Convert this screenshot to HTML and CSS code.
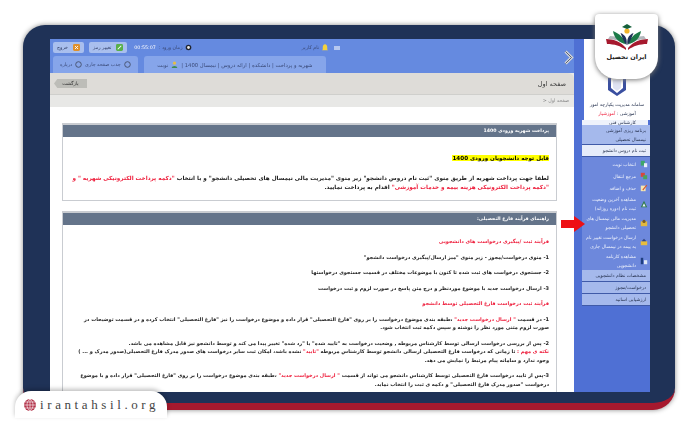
FILE: index.html
```html
<!DOCTYPE html>
<html lang="fa" dir="rtl">
<head>
  <meta charset="UTF-8">
  <title>راهنمای فرآیند فارغ التحصیلی</title>
  <link rel="stylesheet" href="styles.css">
</head>
<body>
  <div class="frame">
    <div class="side">
      <div class="brand">
        <svg class="emblem" viewBox="0 0 20 18"><path d="M1 0h3v10l6 5 6-5V0h3v12l-9 6-9-6z" fill="#3a4fa0"/><path d="M6 2h8v8l-4 3-4-3z" fill="#dfe3f3"/></svg>
        <p>سامانه مدیریت یکپارچه امور آموزشی : <span class="red">آموزشیار</span></p>
      </div>
      <div class="user">کارشناس فنی</div>
      <div class="menu-head two">برنامه ریزی آموزشی<br>نیمسال تحصیلی</div>
      <div class="menu-head open">ثبت نام دروس دانشجو</div>
      <ul class="submenu">
        <li><svg viewBox="0 0 10 10"><rect x="1" y="1" width="5" height="6" fill="#3fa66a"/><rect x="5" y="4" width="4" height="5" fill="#e9eef8"/></svg><span>انتخاب نوبت</span></li>
        <li><svg viewBox="0 0 10 10"><rect x="1" y="1" width="5" height="5" fill="#d8473c"/><rect x="4" y="4" width="5" height="5" fill="#4aa35e"/></svg><span>مرجع انتقال</span></li>
        <li><svg viewBox="0 0 10 10"><rect x="1" y="2" width="6" height="7" fill="#f3e6b4"/><path d="M3 7l5-6 1 1-5 6z" fill="#d8562c"/></svg><span>حذف و اضافه</span></li>
        <li class="tall"><svg viewBox="0 0 10 10"><path d="M5 1l4 8H1z" fill="#2f7a4d"/><path d="M5 4l2 4H3z" fill="#e6edf7"/></svg><span>مشاهده آخرین وضعیت<br>ثبت نام (دوره روزانه)</span></li>
        <li class="tall"><svg viewBox="0 0 10 10"><rect x="1" y="3" width="8" height="6" fill="#e2b93f"/><circle cx="5" cy="3" r="2" fill="#7a5b23"/></svg><span>مدیریت مالی نیمسال های<br>تحصیلی دانشجو</span></li>
        <li class="tall"><svg viewBox="0 0 10 10"><rect x="1" y="4" width="8" height="5" fill="#e8bd3c"/><path d="M2 4l3-3 3 3z" fill="#33467f"/></svg><span>ارسال درخواست تغییر نام<br>به بیمه در نیمسال جاری</span></li>
        <li class="tall"><svg viewBox="0 0 10 10"><rect x="1" y="1" width="3" height="8" fill="#1f3f7f"/><rect x="5" y="4" width="4" height="5" fill="#dfe8f6"/></svg><span>مشاهده کارنامه<br>دانشجویی</span></li>
      </ul>
      <div class="menu-head">مشخصات نظام دانشجویی</div>
      <div class="menu-head">درخواست/مجوز</div>
      <div class="menu-head">ارزشیابی اساتید</div>
    </div>

    <div class="main">
      <div class="top">
        <div class="topbar">
          <div class="user-name">
            <i class="mini"></i>
            <svg viewBox="0 0 8 10"><path d="M4 0c2 0 3 2 3 4v3l1 1H0l1-1V4c0-2 1-4 3-4z" fill="#f4d23c"/></svg>
            <span>نام کاربر</span>
          </div>
          <div class="top-left">
            <span class="clock">
              <svg viewBox="0 0 10 10"><circle cx="5" cy="5" r="4" fill="#20242e"/><circle cx="5" cy="5" r="2" fill="#e6e6e6"/></svg>
              زمان ورود : <b>00:55:07</b>
            </span>
            <button class="btn"><svg viewBox="0 0 10 10"><rect width="10" height="10" rx="2" fill="#58b04a"/><path d="M2 7l5-5 1 1-5 5z" fill="#fff"/></svg>تغییر رمز</button>
            <button class="btn"><svg viewBox="0 0 10 10"><rect width="10" height="10" rx="2" fill="#e0912c"/><path d="M3 3l4 4M7 3l-4 4" stroke="#fff" stroke-width="1.4"/></svg>خروج</button>
          </div>
        </div>
        <div class="tabs">
          <div class="tab wide">شهریه و پرداخت | دانشکده | ارائه دروس | نیمسال 1400 | <svg viewBox="0 0 10 10"><circle cx="5" cy="3" r="2.4" fill="#e3bd49"/><path d="M1 10c0-4 8-4 8 0z" fill="#3f8c52"/></svg> نوبت</div>
          <div class="tab"><svg viewBox="0 0 10 10"><circle cx="5" cy="5" r="4" fill="none" stroke="#4a5674" stroke-width="1.4"/></svg> جذب صفحه جاری <svg viewBox="0 0 10 10"><circle cx="5" cy="5" r="4" fill="none" stroke="#4a5674" stroke-width="1.4"/></svg> درباره</div>
        </div>
        <svg class="chevron" viewBox="0 0 10 15"><path d="M1.5 1.5l6 6-6 6" fill="none" stroke="#d5d5d5" stroke-width="3"/><path d="M1.5 1.5l6 6-6 6" fill="none" stroke="#55627c" stroke-width="1"/></svg>
      </div>

      <div class="page-head">
        <div class="title-row">
          <h1>صفحه اول</h1>
          <span class="back">بازگشت</span>
        </div>
        <div class="crumb">صفحه اول &lt;</div>
      </div>

      <div class="content">
        <section class="panel first">
          <h2>پرداخت شهریه ورودی 1400</h2>
          <div class="panel-body">
            <p class="notice"><mark>قابل توجه دانشجویان ورودی 1400</mark></p>
            <p class="lead">لطفا جهت پرداخت شهریه از طریق منوی "ثبت نام دروس دانشجو" زیر منوی "مدیریت مالی نیمسال های تحصیلی دانشجو" و با انتخاب <span class="red">"دکمه پرداخت الکترونیکی شهریه " و "دکمه پرداخت الکترونیکی هزینه بیمه و خدمات آموزشی"</span> اقدام به پرداخت نمایید.</p>
          </div>
        </section>

        <section class="panel">
          <h2>راهنمای فرآیند فارغ التحصیلی:</h2>
          <div class="panel-body steps">
            <p class="red">فرآیند ثبت /پیگیری درخواست های دانشجویی</p>
            <p>1- منوی درخواست/مجوز - زیر منوی "میز ارسال/پیگیری درخواست دانشجو"</p>
            <p>2- جستجوی درخواست های ثبت شده تا کنون با موضوعات مختلف در قسمت جستجوی درخواستها</p>
            <p>3- ارسال درخواست جدید با موضوع موردنظر و درج متن پاسخ در صورت لزوم و ثبت درخواست</p>
            <p class="red">فرآیند ثبت درخواست فارغ التحصیلی توسط دانشجو</p>
            <p>1- در قسمت <span class="red">" ارسال درخواست جدید"</span> ،طبقه بندی موضوع درخواست را بر روی "فارغ التحصیلی" قرار داده و موضوع درخواست را نیز "فارغ التحصیلی" انتخاب کرده و در قسمت توضیحات در صورت لزوم متنی مورد نظر را نوشته و سپس دکمه ثبت انتخاب شود.</p>
            <p>2- پس از بررسی درخواست ارسالی توسط کارشناس مربوطه , وضعیت درخواست به "تایید شده" یا "رد شده" تغییر پیدا می کند و توسط دانشجو نیز قابل مشاهده می باشد.<br><span class="red">نکته ی مهم :</span> تا زمانی که درخواست فارغ التحصیلی ارسالی دانشجو توسط کارشناس مربوطه <span class="red">"تایید"</span> نشده باشد، امکان ثبت سایر درخواست های صدور مدرک فارغ التحصیلی(صدور مدرک و ... ) وجود ندارد و سامانه پیام مرتبط را نمایش می دهد.</p>
            <p>3-پس از تایید درخواست فارغ التحصیلی توسط کارشناس دانشجو می تواند از قسمت <span class="red">" ارسال درخواست جدید"</span> ،طبقه بندی موضوع درخواست را بر روی "فارغ التحصیلی" قرار داده و با موضوع درخواست "صدور مدرک فارغ التحصیلی" و دکمه ی ثبت را انتخاب نماید.</p>
          </div>
        </section>
      </div>
    </div>
  </div>

  <svg class="arrow" viewBox="0 0 24 16"><path d="M0 4h13V0l11 8-11 8v-4H0z" fill="#ee0f14"/></svg>

  <div class="logo-card">
    <svg viewBox="0 0 42 26">
      <path d="M0 15c8 0 15 3 20 9v2C15 22 8 20 1 20z" fill="#a6192e"/>
      <path d="M42 15c-8 0-15 3-20 9v2c5-4 12-6 19-6z" fill="#a6192e"/>
      <path d="M4 12c7 0 13 3 16 9C15 17 9 15 2 15z" fill="#b4b8bd"/>
      <path d="M38 12c-7 0-13 3-16 9 5-4 11-6 18-6z" fill="#b4b8bd"/>
      <path d="M20 20C18 14 14 10 7 7c1 7 6 12 13 13z" fill="#1c7a48"/>
      <path d="M22 20c2-6 6-10 13-13-1 7-6 12-13 13z" fill="#1c7a48"/>
      <path d="M20.500 21c-3-3-4-8-6-12 5 2 7 6 6 12zM21.500 21c3-3 4-8 6-12-5 2-7 6-6 12z" fill="#1f3257"/>
      <circle cx="21" cy="7" r="2.600" fill="#f0b429"/>
      <path d="M16 3l5-3 5 3-5 2z" fill="#14603a"/>
    </svg>
    <span>ایران تحصیل</span>
  </div>

  <div class="site-badge">
    <svg viewBox="0 0 14 14"><circle cx="7" cy="7" r="6" fill="#b3334a"/><path d="M1 7h12M7 1v12M2 4h10M2 10h10M7 1c-4 3-4 9 0 12M7 1c4 3 4 9 0 12" fill="none" stroke="#fff" stroke-width=".6"/></svg>
    <span>irantahsil.org</span>
  </div>
</body>
</html>
```

FILE: styles.css
```css
html, body {
  margin: 0;
  height: 430px;
  overflow: hidden;
  background: white;
}
body {
  font-family: "DejaVu Sans", "Noto Sans", sans-serif;
  position: relative;
}
p, h1, h2, ul {
  margin: 0;
  padding: 0;
}
.red {
  color: #ee1c3a;
}

/* outer window */
.frame {
  display: flex;
  height: 364px;
  margin: 25px 25px 0 23px;
  padding: 14px 25px 0 27px;
  background: #1f3257;
  border-bottom: 7px solid #a6192e;
  border-radius: 22px;
  box-shadow: 0 0 5px #8a8a8a;
  filter: blur(.35px);
}
.frame > * {
  height: 353px;
}

/* right column */
.side {
  flex: 0 0 68px;
  padding-left: 8px;
  background: #4f70d4;
  color: #26324f;
  font-size: 4.6px;
}
.brand {
  height: 81px;
  box-sizing: border-box;
  margin-left: 2px;
  padding-top: 39px;
  background: white;
  text-align: center;
}
.emblem {
  display: block;
  width: 20px;
  height: 18px;
  margin: 0 auto 4px;
}
.brand p {
  line-height: 9px;
  padding: 0 2px;
}
.user {
  height: 5px;
  margin-right: 2px;
  padding-right: 12px;
  background: #eef2fb;
  line-height: 5px;
}
.menu-head {
  height: 11px;
  padding: 0 4px 0 1px;
  line-height: 11px;
  background: #a5b9ec;
  border-bottom: 1px solid #3f5aa8;
}
.menu-head.two {
  height: 20px;
  line-height: 9px;
  padding-top: 1px;
  box-sizing: border-box;
}
.menu-head.open {
  background: #e6ecfa;
}
.submenu {
  list-style: none;
  box-sizing: border-box;
  height: 113px;
  padding-top: 1px;
  background: #6d88dc;
  color: #eef2fc;
}
.submenu li {
  display: flex;
  align-items: center;
  gap: 4px;
  height: 12px;
  padding: 0 2px 0 1px;
  line-height: 9px;
}
.submenu li.tall {
  height: 19px;
}
.submenu svg {
  flex: 0 0 8px;
  width: 8px;
  height: 8px;
}
.submenu span {
  flex: 1;
}

/* left column */
.main {
  flex: 1;
  min-width: 0;
  display: flex;
  flex-direction: column;
  overflow: hidden;
  background: white;
  font-size: 4.8px;
}
.top {
  flex: 0 0 34px;
  position: relative;
  background: #658ae0;
  color: #3a4a78;
}
.topbar {
  display: flex;
  justify-content: space-between;
  align-items: center;
  height: 17px;
  padding: 0 234px 0 3px;
}
.user-name, .top-left, .clock {
  display: flex;
  align-items: center;
  gap: 3px;
}
.mini {
  width: 6px;
  height: 4px;
  margin-left: 3px;
  background: #b6c8f0;
}
.user-name svg {
  width: 6px;
  height: 8px;
}
.top-left {
  gap: 5px;
}
.clock {
  margin-left: 2px;
}
.clock svg {
  width: 7px;
  height: 7px;
}
.clock b {
  color: white;
  font-weight: normal;
}
.btn {
  display: flex;
  align-items: center;
  gap: 5px;
  height: 11px;
  padding: 0 4px;
  border: 0;
  border-radius: 2px;
  background: #a9bfee;
  color: #2c3a63;
  font: inherit;
}
.btn svg {
  width: 7px;
  height: 7px;
}
.tabs {
  display: flex;
  justify-content: flex-end;
  gap: 6px;
  height: 17px;
  padding-left: 3px;
}
.tab {
  display: flex;
  align-items: center;
  gap: 3px;
  padding: 0 7px;
  background: #86a5ea;
  border-radius: 3px 3px 0 0;
}
.tab.wide {
  width: 168px;
  justify-content: center;
  font-size: 5.3px;
}
.tab svg {
  width: 7px;
  height: 7px;
}
.chevron {
  position: absolute;
  top: 11px;
  right: 0;
  width: 10px;
  height: 15px;
}
.page-head {
  flex: 0 0 34px;
  background: #e8e8e6;
}
.title-row {
  display: flex;
  justify-content: space-between;
  align-items: center;
  height: 21px;
  padding: 0 8px 0 4px;
  background: #dedcd8;
  border-top-right-radius: 6px;
  border-bottom: 1px solid #cfcfcc;
}
h1 {
  font-size: 6.5px;
  font-weight: normal;
  color: #3a3a3a;
}
.back {
  width: 33px;
  height: 9px;
  line-height: 9px;
  text-align: center;
  background: #bdbdb8;
  color: #333;
  clip-path: polygon(10% 0, 100% 0, 100% 100%, 10% 100%, 0 50%);
}
.crumb {
  padding: 3px 5px;
  color: #888;
}
.content {
  flex: 1;
  padding: 16px 17px 0 12px;
  overflow: hidden;
}
.panel {
  border: 1px solid #c9ccd1;
  border-top-width: 2px;
  color: #1a1a1a;
}
.panel.first {
  margin-bottom: 10px;
}
h2 {
  height: 12px;
  padding-right: 7px;
  background: #64748a;
  color: white;
  font-size: 4.7px;
  font-weight: bold;
  line-height: 12px;
}
.panel-body {
  padding: 17px 7px 8px;
  font-size: 5px;
  font-weight: bold;
  line-height: 9px;
}
.notice {
  margin-bottom: 11px;
  font-size: 5.6px;
}
.lead {
  font-size: 5.7px;
}
mark {
  background: #ffff00;
}
.steps {
  padding: 12px 7px 60px;
  line-height: 8.5px;
}
.steps p {
  margin-bottom: 7px;
}

/* things laid over the picture */
.arrow {
  position: absolute;
  left: 561px;
  top: 216px;
  width: 24px;
  height: 16px;
}
.logo-card {
  position: absolute;
  left: 595px;
  top: 14px;
  width: 63px;
  height: 65px;
  background: white;
  border-radius: 4px 4px 22px 22px;
  box-shadow: 0 1px 5px #777;
  text-align: center;
  color: #222;
  font-size: 6.4px;
  font-weight: bold;
}
.logo-card svg {
  display: block;
  width: 42px;
  height: 26px;
  margin: 10px auto 3px;
}
.site-badge {
  position: absolute;
  left: 15px;
  top: 391px;
  width: 152px;
  height: 27px;
  box-sizing: border-box;
  padding-left: 8px;
  display: flex;
  align-items: center;
  gap: 3px;
  background: white;
  border-radius: 16px 16px 0 0;
  box-shadow: 0 -2px 4px rgba(0, 0, 0, .25);
  color: #444;
  font-family: "Liberation Serif", serif;
  font-size: 13px;
  letter-spacing: 3.6px;
  direction: ltr;
}
.site-badge svg {
  width: 14px;
  height: 14px;
}
```
